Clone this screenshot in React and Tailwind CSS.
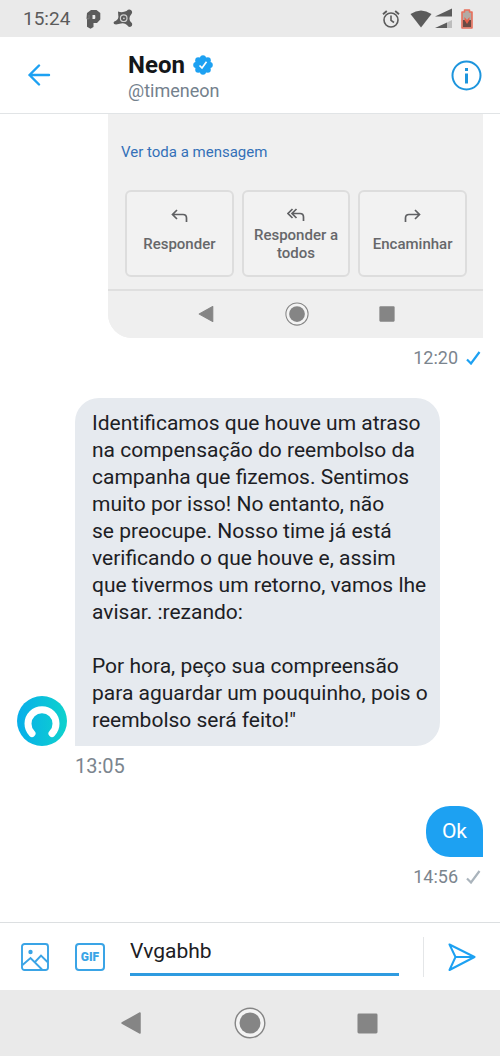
import React, { useState } from "react";

const PaypalIcon = () => (
  <svg width="15" height="20" viewBox="0 0 15 20" fill="#5b5b5b">
    <path
      fillRule="evenodd"
      d="M1 4 L5 1 H10.500 L14.300 4 V10.500 L11 14 H7.500 V18 L4.500 19.700 L1 17.800 V10.500 L0.500 9.500 Z M6.500 6 V10 H8.700 L9.300 9.300 V6.600 L8.700 6 Z"
    />
    <path d="M1 9.800 H3 V6" fill="none" stroke="#8b8b8b" strokeWidth="0.700" />
  </svg>
);

const AvastIcon = () => (
  <svg width="20" height="19" viewBox="0 0 20 19" fill="#5b5b5b">
    <path d="M5 2.500 Q9.500 4 13.500 2 Q16 -0.300 18.200 1.200 Q20 3 18.300 5.300 Q15.500 8 17 12 L19 14.300 Q19.800 17 17.500 17.800 Q15.500 18.300 14 16 Q11.500 13.600 8 14.500 L3 15.500 Q0.500 15.500 0.500 13.800 Q0.800 12.400 3 11.800 Q6 10 5.300 7 Z" />
    <circle cx="10.700" cy="9.200" r="3.300" fill="none" stroke="#d0d0d0" strokeWidth="1.200" />
    <circle cx="10.900" cy="9.400" r="0.800" fill="#dddddd" />
  </svg>
);

const AlarmIcon = () => (
  <svg
    width="18"
    height="18"
    viewBox="0 0 18 18"
    fill="none"
    stroke="#5b5b5b"
    strokeWidth="1.6"
  >
    <circle cx="9" cy="10" r="7" />
    <path d="M9 5.500 V10.300 L12 12.500" />
    <path d="M1 4.200 L4.800 1 M17 4.200 L13.200 1" strokeWidth="1.900" />
  </svg>
);

const WifiIcon = () => (
  <svg width="22" height="18" viewBox="0 0 22 18" fill="#5b5b5b">
    <path d="M0.500 4 Q11 -3 21.500 4 L11 17.500 Z" />
  </svg>
);

const SignalIcon = () => (
  <svg width="19" height="21" viewBox="0 0 19 21" fill="#5b5b5b">
    <path d="M1 8.500 L18 0.500 V8.500 Z" />
    <path d="M1 20 L13 14.500 V20 Z" />
    <path d="M13 14.500 L18 12 V20 H13 Z" fill="#bdbdbd" />
  </svg>
);

const BatteryIcon = () => (
  <svg width="12" height="20" viewBox="0 0 12 20">
    <path
      d="M3.500 1 H8.500 V3 H11 V19 H1 V3 H3.500 Z"
      fill="#b3aaa4"
      stroke="#e8705c"
      strokeWidth="1.600"
      strokeLinejoin="round"
    />
    <path d="M2 11 H10 V18 H2 Z" fill="#6b4a43" />
    <path d="M3.500 8 V11 L6 15 L8.500 11 V8 L6 11 Z" fill="#ea5f48" />
  </svg>
);

const VerifiedIcon = () => (
  <svg width="20" height="20" viewBox="0 0 20 20">
    <g fill="#1da1f2">
      <circle cx="10" cy="10" r="8" />
      <circle cx="10" cy="3.200" r="3" />
      <circle cx="14.800" cy="5.200" r="3" />
      <circle cx="16.800" cy="10" r="3" />
      <circle cx="14.800" cy="14.800" r="3" />
      <circle cx="10" cy="16.800" r="3" />
      <circle cx="5.200" cy="14.800" r="3" />
      <circle cx="3.200" cy="10" r="3" />
      <circle cx="5.200" cy="5.200" r="3" />
    </g>
    <path
      d="M6.500 10.500 L9 13 L13.500 6.800"
      fill="none"
      stroke="#fff"
      strokeWidth="1.700"
    />
  </svg>
);

const CheckIcon = ({ color }) => (
  <svg width="15" height="14" viewBox="0 0 15 14" fill="none">
    <path d="M1 8.500 L5 12.500 L13.500 1" stroke={color} strokeWidth="2.200" />
  </svg>
);

const ReplyIcon = () => (
  <svg
    width="17"
    height="14"
    viewBox="0 0 17 14"
    fill="none"
    stroke="#5f6063"
    strokeWidth="1.700"
  >
    <path d="M6 1 L1.500 5.500 L6 10 M1.500 5.500 H12 Q15.500 5.500 15.500 9 V13" />
  </svg>
);

const ReplyAllIcon = () => (
  <svg
    width="18"
    height="14"
    viewBox="0 0 18 14"
    fill="none"
    stroke="#5f6063"
    strokeWidth="1.700"
  >
    <path d="M5.500 1 L1 5.500 L5.500 10 M9.500 1 L5 5.500 L9.500 10 M5 5.500 H13 Q16.500 5.500 16.500 9 V13" />
  </svg>
);

const ForwardIcon = () => (
  <svg
    width="17"
    height="14"
    viewBox="0 0 17 14"
    fill="none"
    stroke="#5f6063"
    strokeWidth="1.700"
  >
    <path d="M11 1 L15.500 5.500 L11 10 M15.500 5.500 H5 Q1.500 5.500 1.500 9 V13" />
  </svg>
);

const NavBack = ({ size }) => (
  <svg width={size} height={size} viewBox="0 0 24 24">
    <path
      d="M3 12 L21 2 V22 Z"
      fill="#858585"
      stroke="#858585"
      strokeWidth="1.500"
      strokeLinejoin="round"
    />
  </svg>
);

const NavHome = ({ size }) => (
  <svg width={size} height={size} viewBox="0 0 32 32">
    <circle cx="16" cy="16" r="14.800" fill="#f3f3f3" stroke="#858585" strokeWidth="1.400" />
    <circle cx="16" cy="16" r="10.500" fill="#858585" />
  </svg>
);

const NavRecent = ({ size }) => (
  <svg width={size} height={size} viewBox="0 0 22 22">
    <rect x="0.500" y="0.500" width="21" height="21" rx="1.500" fill="#858585" />
  </svg>
);

const NeonAvatar = () => (
  <svg width="50" height="50" viewBox="0 0 50 50" className="shrink-0">
    <defs>
      <linearGradient id="neon" x1="0" y1="0" x2="1" y2="0">
        <stop offset="0" stopColor="#08aeea" />
        <stop offset="1" stopColor="#0ed2cd" />
      </linearGradient>
    </defs>
    <circle cx="25" cy="25" r="25" fill="url(#neon)" />
    <path
      d="M15 37.500 A14 14 0 1 1 35 37.500"
      fill="none"
      stroke="#fff"
      strokeWidth="7"
      strokeLinecap="round"
    />
  </svg>
);

const StatusBar = () => (
  <div className="flex h-[37px] items-center bg-[#eaeaea] pr-[27px] pl-[23px] text-[19px] text-[#5b5b5b]">
    <span className="mr-4 pt-0.5">15:24</span>
    <PaypalIcon />
    <span className="w-3" />
    <AvastIcon />
    <div className="ml-auto flex items-center">
      <AlarmIcon />
      <span className="w-2.5" />
      <WifiIcon />
      <span className="w-0.5" />
      <SignalIcon />
      <span className="w-2" />
      <BatteryIcon />
    </div>
  </div>
);

const Header = () => (
  <header className="flex h-[77px] items-center border-b border-[#e1e4e6] pr-[18px] pl-7">
    <button aria-label="Voltar">
      <svg
        width="23"
        height="22"
        viewBox="0 0 23 22"
        fill="none"
        stroke="#1da1f2"
        strokeWidth="2.400"
        strokeLinecap="round"
        strokeLinejoin="round"
      >
        <path d="M11 1.500 L1.500 11 L11 20.500 M1.500 11 H21" />
      </svg>
    </button>
    <div className="ml-[77px] grow pt-1">
      <h1 className="flex items-center gap-2 text-2xl leading-7 font-bold text-[#14171a]">
        Neon <VerifiedIcon />
      </h1>
      <p className="text-lg leading-6 text-[#74818d]">@timeneon</p>
    </div>
    <button aria-label="Informações">
      <svg width="31" height="31" viewBox="0 0 31 31" fill="none" stroke="#1d95dd">
        <circle cx="15.500" cy="15.500" r="14" strokeWidth="2" />
        <path d="M15.500 13.500 V23.500" strokeWidth="3" />
        <path d="M15.500 8 V11" strokeWidth="3" />
      </svg>
    </button>
  </header>
);

const mailActions = [
  { label: "Responder", Icon: ReplyIcon },
  { label: "Responder a todos", Icon: ReplyAllIcon },
  { label: "Encaminhar", Icon: ForwardIcon },
];

const MailAttachment = () => (
  <div className="ml-[91px] overflow-hidden rounded-bl-3xl bg-[#f0f0f0]">
    <a href="#mensagem" className="block pt-7 pl-[13px] text-[15px] leading-5 text-[#3470b8]">
      Ver toda a mensagem
    </a>
    <div className="mt-7 mr-4 ml-[17px] grid grid-cols-3 gap-2">
      {mailActions.map(({ label, Icon }) => (
        <button
          key={label}
          className="flex h-[87px] flex-col items-center justify-center gap-1 rounded-md border-2 border-[#dddddd] bg-[#f2f2f2] px-2 pt-0.5 text-[15px] leading-[18px] font-medium text-[#66676a]"
        >
          <Icon />
          <span className={label.length > 12 ? "" : "py-2"}>{label}</span>
        </button>
      ))}
    </div>
    <div className="mt-3 flex h-[49px] items-center justify-center gap-[70px] border-t-2 border-[#dfdfdf] bg-[#efefef] pb-0.5">
      <NavBack size={18} />
      <NavHome size={24} />
      <NavRecent size={16} />
    </div>
  </div>
);

const message = `Identificamos que houve um atraso
na compensação do reembolso da
campanha que fizemos. Sentimos
muito por isso! No entanto, não
se preocupe. Nosso time já está
verificando o que houve e, assim
que tivermos um retorno, vamos lhe
avisar. :rezando:

Por hora, peço sua compreensão
para aguardar um pouquinho, pois o
reembolso será feito!"`;

const Conversation = () => (
  <main className="grow px-[17px]">
    <MailAttachment />
    <div className="mt-2 flex items-center justify-end gap-2 pr-0.5 text-lg leading-6 text-[#7b858e]">
      12:20 <CheckIcon color="#1da1f2" />
    </div>

    <div className="mt-7 flex items-end gap-2">
      <NeonAvatar />
      <p className="w-[365px] rounded-3xl rounded-bl-none bg-[#e6eaef] px-[17px] py-3 text-[21px] leading-[27px] whitespace-pre text-[#1c2024]">
        {message}
      </p>
    </div>
    <div className="mt-2 ml-[58px] text-xl leading-6 text-[#7b858e]">13:05</div>

    <div className="mt-7 flex justify-end">
      <p className="rounded-3xl rounded-br-none bg-[#1da1f2] px-4 py-3 text-[21px] leading-[27px] text-white">
        Ok
      </p>
    </div>
    <div className="mt-2 flex items-center justify-end gap-2 pr-0.5 text-lg leading-6 text-[#7b858e]">
      14:56 <CheckIcon color="#aab4bc" />
    </div>
  </main>
);

const Composer = () => {
  const [text, setText] = useState("Vvgabhb");

  return (
    <form
      className="flex h-[68px] items-center border-t border-[#dcdfe1] pr-6 pl-[21px]"
      onSubmit={(e) => e.preventDefault()}
    >
      <button type="button" aria-label="Enviar imagem">
        <svg width="28" height="28" viewBox="0 0 28 28" fill="none" stroke="#3aa4e6" strokeWidth="1.900">
          <rect x="1" y="1" width="26" height="26" rx="2.500" />
          <path d="M1.500 22 L9.500 15 L21 26.500 M14 19 L20 12.500 L26.500 19" />
          <circle cx="9.500" cy="9" r="2.200" fill="#3aa4e6" stroke="none" />
        </svg>
      </button>
      <button
        type="button"
        className="ml-[26px] h-7 w-[30px] rounded border-2 border-[#3aa4e6] text-xs leading-6 font-black text-[#3aa4e6]"
      >
        GIF
      </button>
      <input
        aria-label="Mensagem"
        type="text"
        value={text}
        onChange={(e) => setText(e.target.value)}
        className="mt-1.5 ml-[25px] h-[47px] min-w-0 grow self-start border-b-3 border-[#2f9be0] text-[21px] text-[#1c2024] outline-none"
      />
      <span className="mx-6 h-10 w-px bg-[#e4e6e8]" />
      <button type="submit" aria-label="Enviar">
        <svg
          width="28"
          height="28"
          viewBox="0 0 28 28"
          fill="none"
          stroke="#1da1f2"
          strokeWidth="2"
          strokeLinejoin="round"
        >
          <path d="M1.500 1.500 L26.500 14 L1.500 27 L7.500 14 Z M7.500 14 H26" />
        </svg>
      </button>
    </form>
  );
};

const NavigationBar = () => (
  <nav className="flex h-[66px] items-center justify-center gap-[91px] bg-[#eaeaea] pr-1">
    <button aria-label="Voltar">
      <NavBack size={24} />
    </button>
    <button aria-label="Início">
      <NavHome size={32} />
    </button>
    <button aria-label="Recentes">
      <NavRecent size={21} />
    </button>
  </nav>
);

const App = () => (
  <div className="flex min-h-screen flex-col bg-white font-['Roboto',sans-serif]">
    <StatusBar />
    <Header />
    <Conversation />
    <Composer />
    <NavigationBar />
  </div>
);

export default App;
